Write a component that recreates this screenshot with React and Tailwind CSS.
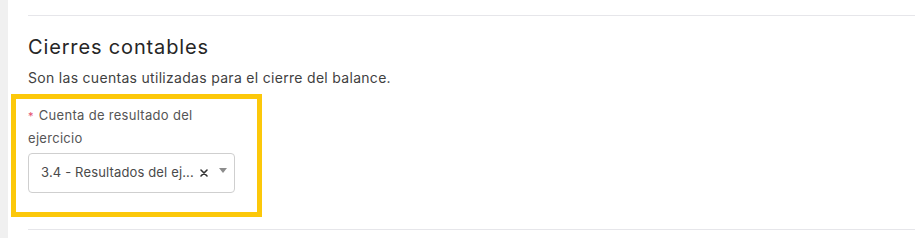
import React from "react";

export default function App() {
  return (
    <div
      className="flex w-[915px] h-[238px] bg-white overflow-hidden"
      style={{ fontFamily: 'Inter, "Open Sans", sans-serif' }}
    >
      <div className="w-2 shrink-0 bg-[#f0f0f0]" />
      <div className="flex-1 pl-5 pt-[15px]">
        <div className="border-t border-[#e6e6ea] pt-[17px] pb-[36px] border-b">
          <h2 className="text-[20px] leading-[28px] tracking-[0.85px] text-[#262626] font-normal">
            Cierres contables
          </h2>
          <p className="mt-[7px] text-[14px] leading-5 tracking-[0.3px] text-[#3f3f3f]">
            Son las cuentas utilizadas para el cierre del balance.
          </p>
          <div className="relative mt-[16px] w-[207px]">
            <div className="pointer-events-none absolute -left-[17px] -top-[10px] -right-[27px] -bottom-[24px] border-[5px] border-[#fcc80a]" />
            <p className="h-[44px] text-[13px] leading-[22px] tracking-[0.3px] text-[#555]">
              <span className="mr-[5px] text-[11px] text-[#e4506f]">*</span>Cuenta de resultado del ejercicio
            </p>
            <div className="mt-[5px] flex h-[40px] items-center rounded-[4px] border border-[#cfcfcf] bg-white pl-3 pr-[7px]">
              <span className="min-w-0 flex-1 whitespace-nowrap text-[13px] tracking-[0.15px] text-[#4a4a4a]">
                3.4 - Resultados del ej...
              </span>
              <svg width="8" height="8" viewBox="0 0 8 8" className="ml-1 shrink-0">
                <path d="M1 1L7 7M7 1L1 7" stroke="#333" strokeWidth="1.6" strokeLinecap="round" />
              </svg>
              <svg width="8" height="5" viewBox="0 0 8 5" className="ml-[11px] mb-[6px] shrink-0">
                <path d="M0 0H8L4 5Z" fill="#8c8c8c" />
              </svg>
            </div>
          </div>
        </div>
      </div>
    </div>
  );
}
